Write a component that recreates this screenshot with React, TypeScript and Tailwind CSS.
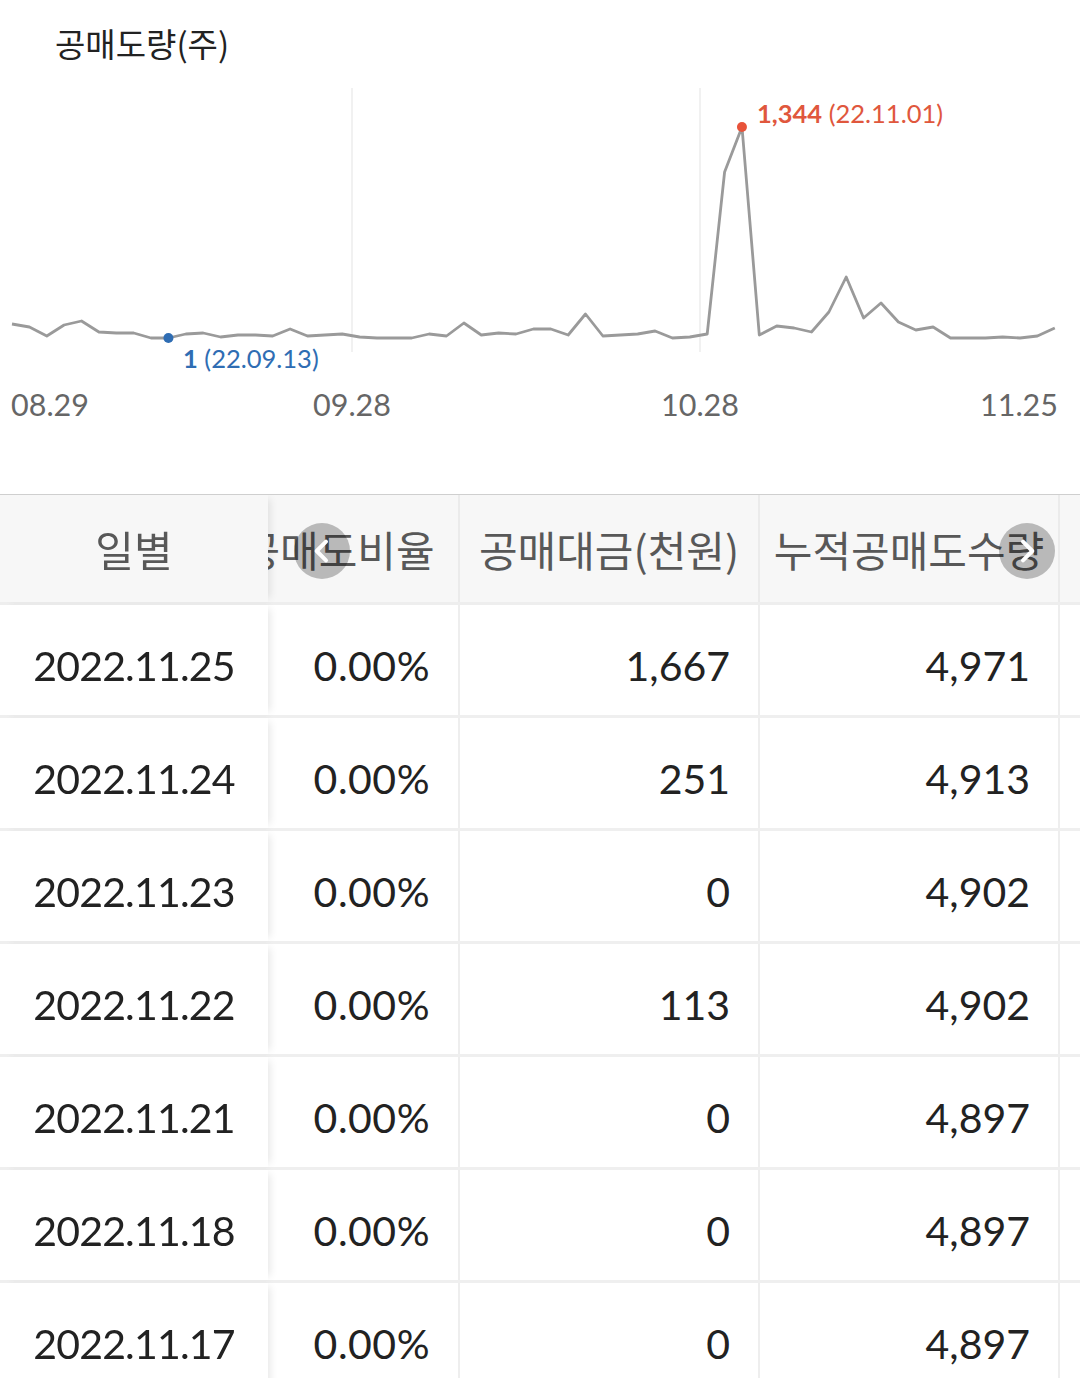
import React from "react";

const Y_OFFSET = 64;

// traced daily values as pixel heights (08.29 -> 11.25, 61 trading days)
const ys = [
  324, 327, 336, 325, 321, 332, 333, 333, 338, 338, 334, 333, 337, 335, 335, 336,
  329, 336, 335, 334, 337, 338, 338, 338, 334, 336, 323, 335, 333, 334, 329, 329,
  335, 314, 336, 335, 334, 331, 338, 337, 334, 172, 127, 335, 326, 328, 332, 312,
  277, 318, 303, 322, 330, 327, 338, 338, 338, 337, 338, 336, 328,
];

const rows = [
  ["2022.11.25", "0.00%", "1,667", "4,971"],
  ["2022.11.24", "0.00%", "251", "4,913"],
  ["2022.11.23", "0.00%", "0", "4,902"],
  ["2022.11.22", "0.00%", "113", "4,902"],
  ["2022.11.21", "0.00%", "0", "4,897"],
  ["2022.11.18", "0.00%", "0", "4,897"],
  ["2022.11.17", "0.00%", "0", "4,897"],
];

const lato = "font-['Lato','Liberation_Sans',sans-serif]";
const kr = "font-['Noto_Sans_CJK_KR','Noto_Sans',sans-serif]";

function Chart() {
  const pts = ys.map((y, i) => [12 + i * 17.38, y - Y_OFFSET]);
  const d = pts.map(([x, y], i) => `${i === 0 ? "M" : "L"}${x.toFixed(1)} ${y}`).join(" ");
  const [minX, minY] = pts[9];
  const [maxX, maxY] = pts[42];

  return (
    <svg width="1080" height="430" viewBox="0 0 1080 430" className="block">
      <line x1="352" y1="24" x2="352" y2="288" stroke="#ececec" strokeWidth="1.5" />
      <line x1="700" y1="24" x2="700" y2="288" stroke="#ececec" strokeWidth="1.5" />
      <path d={d} fill="none" stroke="#9a9a9a" strokeWidth="2.8" strokeLinejoin="round" />
      <circle cx={minX} cy={minY} r="5" fill="#2f6db3" />
      <circle cx={maxX} cy={maxY} r="5" fill="#e8533a" />
      <text x="757" y={123 - Y_OFFSET} fontSize="25.5" fill="#e0573d" fontFamily="Lato, 'Liberation Sans', sans-serif">
        <tspan fontWeight="700">1,344</tspan> (22.11.01)
      </text>
      <text x="183" y={368 - Y_OFFSET} fontSize="25.5" fill="#2f6db3" fontFamily="Lato, 'Liberation Sans', sans-serif">
        <tspan fontWeight="700">1</tspan> (22.09.13)
      </text>
      <g fontSize="30.5" fill="#666" fontFamily="Lato, 'Liberation Sans', sans-serif">
        <text x="11" y={416 - Y_OFFSET}>08.29</text>
        <text x="352" y={416 - Y_OFFSET} textAnchor="middle">09.28</text>
        <text x="700" y={416 - Y_OFFSET} textAnchor="middle">10.28</text>
        <text x="1058" y={416 - Y_OFFSET} textAnchor="end">11.25</text>
      </g>
    </svg>
  );
}

function Chevron({ dir }: { dir: "left" | "right" }) {
  return (
    <svg width="32" height="32" viewBox="0 0 24 24" fill="none" stroke="white" strokeWidth="3" strokeLinecap="round" strokeLinejoin="round">
      {dir === "left" ? <path d="M15 5l-7 7 7 7" /> : <path d="M9 5l7 7-7 7" />}
    </svg>
  );
}

export default function App() {
  return (
    <div className="w-[1080px] bg-white text-[#222]">
      <div className={`pl-[55px] pt-[22px] text-[33px] leading-[42px] text-[#222] ${kr}`}>공매도량(주)</div>
      <Chart />

      <div className="relative border-t border-[#cfcfcf]">
        <div
          ref={(el) => {
            if (el) el.scrollLeft = 50;
          }}
          className="overflow-x-auto [scrollbar-width:none]"
        >
          <div className="w-max">
            <div className={`flex h-[110px] border-b-[3px] border-[#eeeeee] bg-[#f7f7f7] text-[42px] text-[#585858] ${kr}`}>
              <div className="sticky left-0 z-10 flex w-[268px] items-center justify-center bg-[#f7f7f7] shadow-[6px_0_8px_-4px_rgba(0,0,0,0.10)]">
                일별
              </div>
              <div className="flex w-[242px] items-center justify-center border-r-2 border-[#ebebeb] whitespace-nowrap">공매도비율</div>
              <div className="flex w-[300px] items-center justify-center border-r-2 border-[#ebebeb] whitespace-nowrap">공매대금(천원)</div>
              <div className="flex w-[300px] items-center justify-center border-r-2 border-[#ebebeb] whitespace-nowrap">누적공매도수량</div>
              <div className="w-[300px]" />
            </div>

            {rows.map((r) => (
              <div key={r[0]} className={`flex h-[113px] border-b-[3px] border-[#efefef] text-[41px] text-[#222] ${lato}`}>
                <div className="sticky left-0 z-10 flex w-[268px] items-center justify-center bg-white pt-[12px] tracking-[-0.8px] shadow-[6px_0_8px_-4px_rgba(0,0,0,0.10)]">
                  {r[0]}
                </div>
                <div className="flex w-[242px] items-center justify-end border-r-2 border-[#eeeeee] pt-[12px] pr-[28px] tracking-[0.5px]">{r[1]}</div>
                <div className="flex w-[300px] items-center justify-end border-r-2 border-[#eeeeee] pt-[12px] pr-[28px]">{r[2]}</div>
                <div className="flex w-[300px] items-center justify-end border-r-2 border-[#eeeeee] pt-[12px] pr-[28px]">{r[3]}</div>
                <div className="w-[300px]" />
              </div>
            ))}
          </div>
        </div>

        <button className="absolute left-[294px] top-[28px] z-20 flex h-[56px] w-[56px] items-center justify-center rounded-full bg-black/25">
          <Chevron dir="left" />
        </button>
        <button className="absolute left-[999px] top-[28px] z-20 flex h-[56px] w-[56px] items-center justify-center rounded-full bg-black/25">
          <Chevron dir="right" />
        </button>
      </div>
    </div>
  );
}
